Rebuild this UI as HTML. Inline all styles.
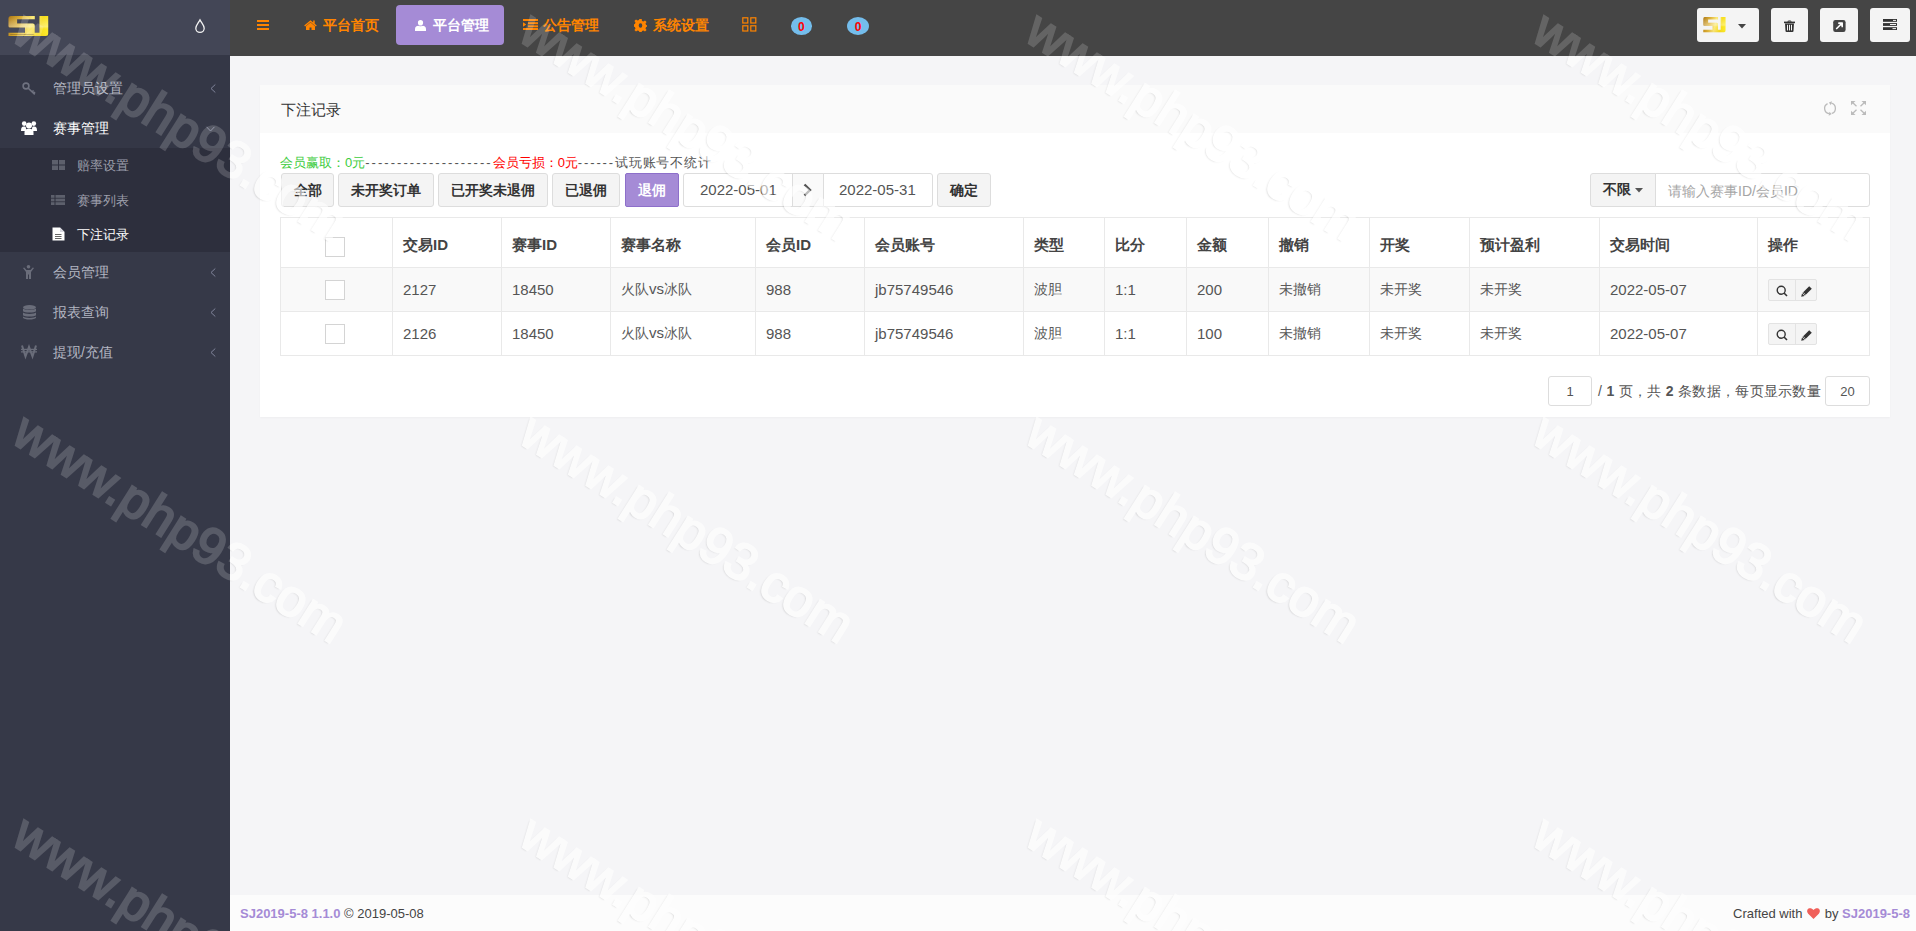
<!DOCTYPE html>
<html><head><meta charset="utf-8">
<style>
*{box-sizing:border-box;margin:0;padding:0}
html,body{width:1916px;height:931px;overflow:hidden;background:#f5f5f7;font-family:"Liberation Sans",sans-serif;color:#333}
.a{position:absolute}
svg{position:absolute;overflow:visible}
#side{position:absolute;left:0;top:0;width:230px;height:931px;background:#363948}
#logo{position:absolute;left:0;top:0;width:230px;height:55px;background:#434656}
#topnav{position:absolute;left:230px;top:0;width:1686px;height:56px;background:#454545}
.nav{position:absolute;top:17px;line-height:16px;color:#ff8400;font-weight:bold;font-size:14px;white-space:nowrap}
.mt{position:absolute;left:53px;line-height:16px;color:#b4b7c3;font-size:14px;white-space:nowrap}
.st{position:absolute;left:77px;line-height:16px;color:#9d9fab;font-size:13px;white-space:nowrap}
.chev{position:absolute;left:210px;width:6px;height:9px}
#panel{position:absolute;left:260px;top:85px;width:1630px;height:332px;background:#fff;box-shadow:0 1px 2px rgba(0,0,0,0.03)}
#phead{position:absolute;left:0;top:0;width:1630px;height:48px;background:#fafafa}
.btn{position:absolute;top:173px;height:34px;line-height:32px;border:1px solid #ddd;background:#f4f4f4;border-radius:3px;color:#333;font-weight:bold;font-size:14px;text-align:center;white-space:nowrap}
.inp{position:absolute;top:173px;height:34px;line-height:32px;border:1px solid #ddd;background:#fff;color:#555;font-size:15px;white-space:nowrap}
table{position:absolute;left:280px;top:217px;width:1590px;table-layout:fixed;border-collapse:collapse;font-size:15px;color:#555}
td,th{border:1px solid #e9e9e9;padding:0 10px;text-align:left;white-space:nowrap}
th{height:50px;font-weight:bold;color:#444;padding-top:5px}
th .cb{position:relative;top:2px}
td{height:44px}
.z{font-style:normal;font-size:14px;color:#5a5a5a}
.cb{display:inline-block;width:20px;height:20px;border:1px solid #d4d4d4;background:#fff;vertical-align:middle;margin-left:34px}
.ops{display:inline-block;position:relative;width:49px;height:22px;margin-left:0px;vertical-align:middle;border:1px solid #e2e2e2;background:#f4f4f4;border-radius:3px}
.tb{position:absolute;top:8px;height:34px;background:#f4f4f4;border-radius:3px}
#footer{position:absolute;left:230px;top:895px;width:1686px;height:36px;background:#fcfcfc;font-size:13px;line-height:37px;color:#444}
.wm{position:absolute;font-size:52px;font-weight:normal;white-space:nowrap;color:#fff;-webkit-text-stroke:2.2px #fff;opacity:0.17;transform-origin:0 0;transform:rotate(32.2deg);line-height:1}
.wl .wm{opacity:0.6;text-shadow:-1px 1.5px 1.5px rgba(0,0,0,0.2)}
</style></head><body>
<div id="side">
  <div id="logo">
    <svg style="left:8px;top:16px" width="41" height="21" viewBox="0 0 41 21" preserveAspectRatio="none"><defs><linearGradient id="g1" x1="0" y1="0" x2="41" y2="14" gradientUnits="userSpaceOnUse"><stop offset="0" stop-color="#a8720e"/><stop offset="0.3" stop-color="#dcae30"/><stop offset="0.55" stop-color="#fbe978"/><stop offset="0.78" stop-color="#f6dc18"/><stop offset="1" stop-color="#ffee22"/></linearGradient><linearGradient id="g1h" x1="0" y1="0" x2="0" y2="21" gradientUnits="userSpaceOnUse"><stop offset="0" stop-color="#fff" stop-opacity="0"/><stop offset="0.5" stop-color="#fff" stop-opacity="0.35"/><stop offset="0.62" stop-color="#fff" stop-opacity="0"/><stop offset="1" stop-color="#c08000" stop-opacity="0.15"/></linearGradient></defs><path d="M3 0 H26.8 V3.3 H9.1 V7.4 H24.7 Q26.7 7.4 26.7 9.4 V16.8 H31.5 V0 H40.2 V17.5 Q40.2 20 37.7 20 H0.5 V16.8 H17 V11.6 H2 Q0.5 11.6 0.5 10.1 V2.5 Q0.5 0 3 0 Z" fill="url(#g1)"/><path d="M3 0 H26.8 V3.3 H9.1 V7.4 H24.7 Q26.7 7.4 26.7 9.4 V16.8 H31.5 V0 H40.2 V17.5 Q40.2 20 37.7 20 H0.5 V16.8 H17 V11.6 H2 Q0.5 11.6 0.5 10.1 V2.5 Q0.5 0 3 0 Z" fill="url(#g1h)"/><rect x="2.3" y="18.3" width="23.5" height="0.7" fill="#6a5520" opacity="0.6"/></svg>
    <svg style="left:194px;top:18px" width="13" height="16" viewBox="0 0 13 16"><path d="M6 1.9 C4.3 5 1.8 7.6 1.8 10.2 A4.2 4.2 0 0 0 10.2 10.2 C10.2 7.6 7.7 5 6 1.9 Z" fill="none" stroke="#f2f2f2" stroke-width="1.3"/></svg>
  </div>
  <div class="a" style="left:0;top:55px;width:230px;height:93px;background:#343746"></div>
  <div class="a" style="left:0;top:148px;width:230px;height:104px;background:#2d2f3d"></div>
  <!-- menu 1 -->
  <svg style="left:22px;top:82px" width="14" height="13" viewBox="0 0 14 13"><circle cx="4" cy="4" r="2.9" fill="none" stroke="#6f7280" stroke-width="1.6"/><path d="M6 6 L12.8 12.3 M10.2 9.8 L11.6 8.5 M11.8 11.3 L13 10.2" stroke="#6f7280" stroke-width="1.6" fill="none"/></svg>
  <div class="mt" style="top:80px">管理员设置</div>
  <svg class="chev" style="top:84px" viewBox="0 0 6 9"><path d="M5.3 0.5 L1 4.5 L5.3 8.5" fill="none" stroke="#80849a" stroke-width="1"/></svg>
  <!-- menu 2 -->
  <svg style="left:21px;top:121px" width="16" height="14" viewBox="0 0 16 14"><g fill="#fff"><circle cx="3.2" cy="2.6" r="2.3"/><circle cx="12.8" cy="2.6" r="2.3"/><path d="M0 10 C0 6 1.5 5.5 3.2 5.5 C4.5 5.5 5 6 5 8 L5 10 Z"/><path d="M16 10 C16 6 14.5 5.5 12.8 5.5 C11.5 5.5 11 6 11 8 L11 10 Z"/><circle cx="8" cy="4.4" r="3"/><path d="M3.5 14 L3.5 11.5 C3.5 8.5 5 7.8 8 7.8 C11 7.8 12.5 8.5 12.5 11.5 L12.5 14 Z"/></g></svg>
  <div class="mt" style="top:120px;color:#fff">赛事管理</div>
  <svg style="left:206px;top:126px" width="9" height="6" viewBox="0 0 9 6"><path d="M0.5 0.8 L4.5 5 L8.5 0.8" fill="none" stroke="#80849a" stroke-width="1"/></svg>
  <!-- submenu -->
  <svg style="left:52px;top:160px" width="13" height="10" viewBox="0 0 13 10"><g fill="#5d606c"><rect x="0" y="0" width="6" height="4.5"/><rect x="7" y="0" width="6" height="4.5"/><rect x="0" y="5.5" width="6" height="4.5"/><rect x="7" y="5.5" width="6" height="4.5"/></g></svg>
  <div class="st" style="top:157.5px">赔率设置</div>
  <svg style="left:51px;top:195px" width="14" height="10" viewBox="0 0 14 10"><g fill="#5d606c"><rect x="0" y="0" width="3.5" height="2.8"/><rect x="4.5" y="0" width="9.5" height="2.8"/><rect x="0" y="3.6" width="3.5" height="2.8"/><rect x="4.5" y="3.6" width="9.5" height="2.8"/><rect x="0" y="7.2" width="3.5" height="2.8"/><rect x="4.5" y="7.2" width="9.5" height="2.8"/></g></svg>
  <div class="st" style="top:192.5px">赛事列表</div>
  <svg style="left:52px;top:227px" width="13" height="14" viewBox="0 0 13 14"><path d="M0.5 0.5 L8 0.5 L12.5 5 L12.5 13.5 L0.5 13.5 Z" fill="#fff"/><path d="M8 0.5 L8 5 L12.5 5" fill="#d8d8e0"/><g fill="#666"><rect x="3" y="7" width="6.5" height="1"/><rect x="3" y="9" width="6.5" height="1"/><rect x="3" y="11" width="6.5" height="1"/></g></svg>
  <div class="st" style="top:226.5px;color:#fff">下注记录</div>
  <!-- menu 3-5 -->
  <svg style="left:23px;top:265px" width="11" height="14" viewBox="0 0 11 14"><g fill="#6a6d7a"><circle cx="5.5" cy="1.8" r="1.8"/><path d="M0 3 L1.2 2.5 L3.5 5 L7.5 5 L9.8 2.5 L11 3 L8 7 L8 14 L6 14 L6 9.5 L5 9.5 L5 14 L3 14 L3 7 Z"/></g></svg>
  <div class="mt" style="top:264px">会员管理</div>
  <svg class="chev" style="top:268px" viewBox="0 0 6 9"><path d="M5.3 0.5 L1 4.5 L5.3 8.5" fill="none" stroke="#80849a" stroke-width="1"/></svg>
  <svg style="left:23px;top:305px" width="13" height="15" viewBox="0 0 13 15"><g fill="#6a6d7a"><ellipse cx="6.5" cy="2.3" rx="6.5" ry="2.3"/><path d="M0 3.6 C1 5.3 12 5.3 13 3.6 L13 6.3 C12 8 1 8 0 6.3 Z"/><path d="M0 7.6 C1 9.3 12 9.3 13 7.6 L13 10.3 C12 12 1 12 0 10.3 Z"/><path d="M0 11.6 C1 13.3 12 13.3 13 11.6 L13 12.8 C12 15.2 1 15.2 0 12.8 Z"/></g></svg>
  <div class="mt" style="top:304px">报表查询</div>
  <svg class="chev" style="top:308px" viewBox="0 0 6 9"><path d="M5.3 0.5 L1 4.5 L5.3 8.5" fill="none" stroke="#80849a" stroke-width="1"/></svg>
  <svg style="left:21px;top:345px" width="16" height="12" viewBox="0 0 16 12"><path d="M1 0.5 L4.5 11.5 L8 2 L11.5 11.5 L15 0.5" fill="none" stroke="#6a6d7a" stroke-width="2"/><path d="M0 4.3 H16 M0 6.8 H16" stroke="#6a6d7a" stroke-width="1.2"/></svg>
  <div class="mt" style="top:344px">提现/充值</div>
  <svg class="chev" style="top:348px" viewBox="0 0 6 9"><path d="M5.3 0.5 L1 4.5 L5.3 8.5" fill="none" stroke="#80849a" stroke-width="1"/></svg>
</div>
<div id="topnav"></div>
<svg style="left:257px;top:20px" width="12" height="10" viewBox="0 0 12 10"><g fill="#ff8400"><rect y="0" width="12" height="2"/><rect y="4" width="12" height="2"/><rect y="8" width="12" height="2"/></g></svg>
<svg style="left:303.5px;top:20px" width="13" height="10" viewBox="0 0 13 10"><path fill="#ff8400" d="M6.5 0.3 L0.2 5.6 L1.1 6.5 L6.5 2 L11.9 6.5 L12.8 5.6 L10.7 3.8 L10.7 0.6 L9.2 0.6 L9.2 2.6 Z M2 6.2 L6.5 2.6 L11 6.2 L11 10 L7.5 10 L7.5 7.6 L5.5 7.6 L5.5 10 L2 10 Z"/></svg>
<div class="nav" style="left:323px">平台首页</div>
<div class="a" style="left:396px;top:5px;width:108px;height:40px;background:#a58bd6;border-radius:4px"></div>
<svg style="left:415px;top:20px" width="11" height="11" viewBox="0 0 11 11"><g fill="#fff"><ellipse cx="5.5" cy="2.8" rx="2.6" ry="2.8"/><path d="M0 11 L0 9 C0 6.5 1.8 5.8 3.3 5.8 C4 6.4 7 6.4 7.7 5.8 C9.2 5.8 11 6.5 11 9 L11 11 Z"/></g></svg>
<div class="nav" style="left:433px;color:#fff">平台管理</div>
<svg style="left:523px;top:19px" width="15" height="11" viewBox="0 0 15 11"><g fill="#ff8400"><rect x="0" y="0" width="15" height="2"/><rect x="5" y="3.2" width="10" height="2"/><rect x="5" y="6.3" width="10" height="2"/><rect x="0" y="9" width="15" height="2"/><path d="M0 3.2 L3.3 5.5 L0 7.8 Z"/></g></svg>
<div class="nav" style="left:543px">公告管理</div>
<svg style="left:634px;top:19px" width="13" height="13" viewBox="0 0 13 13"><path fill="#ff8400" fill-rule="evenodd" d="M5.3 0 H7.7 L8 1.9 L9.4 2.5 L11 1.4 L12.6 3 L11.5 4.6 L12.1 6 L13 6.3 V7.7 L12.1 8 L11.5 9.4 L12.6 11 L11 12.6 L9.4 11.5 L8 12.1 L7.7 13 H5.3 L5 12.1 L3.6 11.5 L2 12.6 L0.4 11 L1.5 9.4 L0.9 8 L0 7.7 V5.3 L0.9 5 L1.5 3.6 L0.4 2 L2 0.4 L3.6 1.5 L5 0.9 Z M6.5 4.3 A1.8 2.2 0 1 0 6.5 8.7 A1.8 2.2 0 1 0 6.5 4.3 Z"/></svg>
<div class="nav" style="left:653px">系统设置</div>
<svg style="left:741.5px;top:16.5px" width="15" height="15" viewBox="0 0 15 15"><g fill="none" stroke="#ff8400" stroke-width="1.2"><rect x="0.8" y="0.8" width="5" height="5.2"/><rect x="8.8" y="0.8" width="5" height="5.2"/><rect x="0.8" y="8.8" width="5" height="5.2"/><rect x="8.8" y="8.8" width="5" height="5.2"/></g></svg>
<div class="a" style="left:790.5px;top:17px;width:21.5px;height:18px;border-radius:50%;background:#74bdec;color:#f00;font-weight:bold;font-size:12px;line-height:20px;text-align:center">0</div>
<div class="a" style="left:847px;top:17px;width:22px;height:18px;border-radius:50%;background:#74bdec;color:#f00;font-weight:bold;font-size:12px;line-height:20px;text-align:center">0</div>
<!-- right buttons -->
<div class="tb" style="left:1697px;width:62px;height:34px"></div>
<svg style="left:1703px;top:17px" width="23" height="16" viewBox="0 0 41 21" preserveAspectRatio="none"><defs><linearGradient id="g2" x1="0" y1="0" x2="41" y2="14" gradientUnits="userSpaceOnUse"><stop offset="0" stop-color="#a8720e"/><stop offset="0.3" stop-color="#dcae30"/><stop offset="0.55" stop-color="#fbe978"/><stop offset="0.78" stop-color="#f6dc18"/><stop offset="1" stop-color="#ffee22"/></linearGradient><linearGradient id="g2h" x1="0" y1="0" x2="0" y2="21" gradientUnits="userSpaceOnUse"><stop offset="0" stop-color="#fff" stop-opacity="0"/><stop offset="0.5" stop-color="#fff" stop-opacity="0.35"/><stop offset="0.62" stop-color="#fff" stop-opacity="0"/><stop offset="1" stop-color="#c08000" stop-opacity="0.15"/></linearGradient></defs><path d="M3 0 H26.8 V3.3 H9.1 V7.4 H24.7 Q26.7 7.4 26.7 9.4 V16.8 H31.5 V0 H40.2 V17.5 Q40.2 20 37.7 20 H0.5 V16.8 H17 V11.6 H2 Q0.5 11.6 0.5 10.1 V2.5 Q0.5 0 3 0 Z" fill="url(#g2)"/><path d="M3 0 H26.8 V3.3 H9.1 V7.4 H24.7 Q26.7 7.4 26.7 9.4 V16.8 H31.5 V0 H40.2 V17.5 Q40.2 20 37.7 20 H0.5 V16.8 H17 V11.6 H2 Q0.5 11.6 0.5 10.1 V2.5 Q0.5 0 3 0 Z" fill="url(#g2h)"/></svg>
<svg style="left:1738px;top:23.5px" width="8" height="5" viewBox="0 0 8 5"><path d="M0 0 H8 L4 4.6 Z" fill="#444"/></svg>
<div class="tb" style="left:1771px;width:37px"></div>
<svg style="left:1784px;top:20px" width="11" height="12" viewBox="0 0 11 12"><g fill="#333"><path d="M3.5 1.6 C3.5 0.2 7.5 0.2 7.5 1.6 L7 2 C7 1.2 4 1.2 4 2 Z"/><rect x="0" y="1.6" width="11" height="1.6"/><path d="M1 3.6 H10 L9.5 11.2 C9.4 11.8 9 12 8.5 12 H2.5 C2 12 1.6 11.8 1.5 11.2 Z"/></g><g fill="#f4f4f4"><rect x="3" y="4.8" width="1" height="5.6"/><rect x="5" y="4.8" width="1" height="5.6"/><rect x="7" y="4.8" width="1" height="5.6"/></g></svg>
<div class="tb" style="left:1820px;width:38px"></div>
<svg style="left:1832.5px;top:20px" width="13" height="12" viewBox="0 0 13 12"><rect x="0.2" y="0" width="12.4" height="12" rx="2.2" fill="#444"/><path d="M3.2 9 L8.6 3.6 M5.2 3.2 H9.2 V7.2" fill="none" stroke="#fff" stroke-width="1.5"/><path d="M9.5 2.6 L9.5 6.8 L5.3 2.6 Z" fill="#fff"/></svg>
<div class="tb" style="left:1870px;width:40px"></div>
<svg style="left:1883px;top:19px" width="14" height="11" viewBox="0 0 14 11"><g fill="#333"><rect x="0" y="0" width="14" height="2.8"/><rect x="0" y="4.1" width="14" height="2.8"/><rect x="0" y="8.2" width="14" height="2.8"/></g><g fill="#f4f4f4"><rect x="10" y="0.9" width="3" height="1"/><rect x="7" y="5" width="6" height="1"/><rect x="9.5" y="9.1" width="3.5" height="1"/></g></svg>
<div id="panel"><div id="phead"></div></div>
<div class="a" style="left:281px;top:101px;font-size:15px;line-height:18px;color:#333">下注记录</div>
<svg style="left:1823px;top:101px" width="14" height="15" viewBox="0 0 14 15"><g transform="translate(0,0.4)"><g fill="none" stroke="#bbb" stroke-width="1.3"><path d="M4.55 2.19 A5.4 5.4 0 0 0 6.06 12.32"/><path d="M8.85 12.07 A5.4 5.4 0 0 0 8.4 1.78"/></g><g fill="#bbb"><path d="M8.7 12.7 L5.7 14.4 L6.4 10.3 Z"/><path d="M5.9 1.1 L8.95 -0.2 L7.85 3.8 Z"/></g></g></svg>
<svg style="left:1851px;top:101px" width="15" height="14" viewBox="0 0 15 14"><g fill="none" stroke="#bbb" stroke-width="1.3"><path d="M1 1 L5.5 5.3 M14 1 L9.5 5.3 M1 13 L5.5 8.7 M14 13 L9.5 8.7"/></g><g fill="#bbb"><path d="M0 0 H4.5 L0 4.3 Z"/><path d="M15 0 H10.5 L15 4.3 Z"/><path d="M0 14 H4.5 L0 9.7 Z"/><path d="M15 14 H10.5 L15 9.7 Z"/></g></svg>
<div class="a" style="left:280px;top:154px;font-size:13px;line-height:17px;white-space:nowrap;color:#555"><span style="color:#3ccc3c">会员赢取：0元</span><span style="letter-spacing:2.04px">--------------------</span><span style="color:#f00">会员亏损：0元</span><span style="letter-spacing:1.85px">------</span><span style="letter-spacing:0.85px">试玩账号不统计</span></div>
<div class="btn" style="left:281px;width:53px">全部</div>
<div class="btn" style="left:338px;width:96px">未开奖订单</div>
<div class="btn" style="left:438px;width:110px">已开奖未退佣</div>
<div class="btn" style="left:552px;width:68px">已退佣</div>
<div class="btn" style="left:625px;width:54px;background:#a58bd6;border-color:#8d6fca;border-radius:2px;color:#fff">退佣</div>
<div class="inp" style="left:683px;width:110px;padding-left:16px;border-radius:3px 0 0 3px">2022-05-01</div>
<div class="inp" style="left:792px;width:32px;background:#fafafa"></div>
<svg style="left:803px;top:183px" width="9" height="14" viewBox="0 0 9 14"><path d="M1.5 1.5 L7 7 L1.5 12.5" fill="none" stroke="#555" stroke-width="2.4"/></svg>
<div class="inp" style="left:823px;width:110px;padding-left:15px;border-radius:0 3px 3px 0">2022-05-31</div>
<div class="btn" style="left:937px;width:54px">确定</div>
<div class="a" style="left:1590px;top:173px;width:66px;height:34px;border:1px solid #ddd;background:#f4f4f4;border-radius:3px 0 0 3px"></div>
<div class="a" style="left:1603px;top:181px;font-size:14px;line-height:17px;font-weight:bold;color:#333">不限</div>
<svg style="left:1635px;top:188px" width="8" height="5" viewBox="0 0 8 5"><path d="M0 0 H8 L4 4.5 Z" fill="#555"/></svg>
<div class="a" style="left:1655px;top:173px;width:215px;height:34px;border:1px solid #ddd;background:#fff;border-radius:0 3px 3px 0"></div>
<div class="a" style="left:1668px;top:182.5px;font-size:14px;line-height:17px;color:#a5a5a5;white-space:nowrap">请输入赛事ID/会员ID</div>
<table>
<tr><th style="width:112px"><span class="cb"></span></th><th style="width:109px">交易ID</th><th style="width:109px">赛事ID</th><th style="width:145px">赛事名称</th><th style="width:109px">会员ID</th><th style="width:159px">会员账号</th><th style="width:81px">类型</th><th style="width:82px">比分</th><th style="width:82px">金额</th><th style="width:101px">撤销</th><th style="width:100px">开奖</th><th style="width:130px">预计盈利</th><th style="width:158px">交易时间</th><th style="width:112px">操作</th></tr>
<tr style="background:#f9f9f9"><td><span class="cb"></span></td><td>2127</td><td>18450</td><td><i class="z">火队</i>vs<i class="z">冰队</i></td><td>988</td><td>jb75749546</td><td><i class="z">波胆</i></td><td>1:1</td><td>200</td><td><i class="z">未撤销</i></td><td><i class="z">未开奖</i></td><td><i class="z">未开奖</i></td><td>2022-05-07</td><td></td></tr>
<tr style="background:#fff"><td><span class="cb"></span></td><td>2126</td><td>18450</td><td><i class="z">火队</i>vs<i class="z">冰队</i></td><td>988</td><td>jb75749546</td><td><i class="z">波胆</i></td><td>1:1</td><td>100</td><td><i class="z">未撤销</i></td><td><i class="z">未开奖</i></td><td><i class="z">未开奖</i></td><td>2022-05-07</td><td></td></tr>
</table>
<div class="a" style="left:1768px;top:279px;width:49px;height:22px;border:1px solid #e3e3e3;background:#f4f4f4;border-radius:2px"></div>
<div class="a" style="left:1795px;top:279px;width:1px;height:22px;background:#e3e3e3"></div>
<div class="a" style="left:1768px;top:323px;width:49px;height:22px;border:1px solid #e3e3e3;background:#f4f4f4;border-radius:2px"></div>
<div class="a" style="left:1795px;top:323px;width:1px;height:22px;background:#e3e3e3"></div>
<svg style="left:1776px;top:285px" width="12" height="12" viewBox="0 0 12 12"><circle cx="5.2" cy="5.2" r="4" fill="none" stroke="#333" stroke-width="1.4"/><path d="M8 8 L11 11" stroke="#333" stroke-width="1.6"/></svg>
<svg style="left:1800.5px;top:285.5px" width="11" height="11" viewBox="0 0 11 11"><path d="M8.2 0.2 L10.8 2.8 L4 9.6 L1.4 7 Z M1 7.4 L3.6 10 L0.2 10.8 Z" fill="#333"/><path d="M2.3 6.4 L4.6 8.7" stroke="#f4f4f4" stroke-width="0.6"/></svg>
<svg style="left:1776px;top:329px" width="12" height="12" viewBox="0 0 12 12"><circle cx="5.2" cy="5.2" r="4" fill="none" stroke="#333" stroke-width="1.4"/><path d="M8 8 L11 11" stroke="#333" stroke-width="1.6"/></svg>
<svg style="left:1800.5px;top:329.5px" width="11" height="11" viewBox="0 0 11 11"><path d="M8.2 0.2 L10.8 2.8 L4 9.6 L1.4 7 Z M1 7.4 L3.6 10 L0.2 10.8 Z" fill="#333"/><path d="M2.3 6.4 L4.6 8.7" stroke="#f4f4f4" stroke-width="0.6"/></svg>
<div class="a" style="left:1548px;top:376px;width:44px;height:30px;border:1px solid #ddd;border-radius:3px;background:#fff;font-size:13px;line-height:30px;text-align:center;color:#555">1</div>
<div class="a" style="left:1598px;top:382.5px;font-size:14px;line-height:17px;color:#555;white-space:nowrap;letter-spacing:0.3px">/ <b>1</b> 页，共 <b>2</b> 条数据，每页显示数量</div>
<div class="a" style="left:1825px;top:376px;width:45px;height:30px;border:1px solid #ddd;border-radius:3px;background:#fff;font-size:13px;line-height:30px;text-align:center;color:#555">20</div>
<div id="footer"><span class="a" style="left:10px;top:0"><b style="color:#a58bd6">SJ2019-5-8 1.1.0</b> © 2019-05-08</span><span class="a" style="right:6px;top:0">Crafted with <svg style="position:relative;display:inline-block;vertical-align:-1px;margin:0 1px" width="13" height="11" viewBox="0 0 13 11"><path d="M6.5 11 L1.2 5.8 C-0.4 4.2 -0.2 1.6 1.5 0.6 C3 -0.3 5 0.2 6.5 2 C8 0.2 10 -0.3 11.5 0.6 C13.2 1.6 13.4 4.2 11.8 5.8 Z" fill="#f0605a"/></svg> by <b style="color:#a58bd6">SJ2019-5-8</b></span></div>
<!--WM-->
<div style="position:absolute;left:0;top:0;width:230px;height:931px;overflow:hidden"><div class="wm" style="left:32.9px;top:2.3px">www.php93.com</div><div class="wm" style="left:539.6px;top:2.3px">www.php93.com</div><div class="wm" style="left:1046.4px;top:2.3px">www.php93.com</div><div class="wm" style="left:1553.2px;top:2.3px">www.php93.com</div><div class="wm" style="left:32.9px;top:403.9px">www.php93.com</div><div class="wm" style="left:539.6px;top:403.9px">www.php93.com</div><div class="wm" style="left:1046.4px;top:403.9px">www.php93.com</div><div class="wm" style="left:1553.2px;top:403.9px">www.php93.com</div><div class="wm" style="left:32.9px;top:805.5px">www.php93.com</div><div class="wm" style="left:539.6px;top:805.5px">www.php93.com</div><div class="wm" style="left:1046.4px;top:805.5px">www.php93.com</div><div class="wm" style="left:1553.2px;top:805.5px">www.php93.com</div></div><div style="position:absolute;left:230px;top:0;width:1686px;height:56px;overflow:hidden"><div class="wm" style="left:-197.1px;top:2.3px">www.php93.com</div><div class="wm" style="left:309.6px;top:2.3px">www.php93.com</div><div class="wm" style="left:816.4px;top:2.3px">www.php93.com</div><div class="wm" style="left:1323.2px;top:2.3px">www.php93.com</div><div class="wm" style="left:-197.1px;top:403.9px">www.php93.com</div><div class="wm" style="left:309.6px;top:403.9px">www.php93.com</div><div class="wm" style="left:816.4px;top:403.9px">www.php93.com</div><div class="wm" style="left:1323.2px;top:403.9px">www.php93.com</div><div class="wm" style="left:-197.1px;top:805.5px">www.php93.com</div><div class="wm" style="left:309.6px;top:805.5px">www.php93.com</div><div class="wm" style="left:816.4px;top:805.5px">www.php93.com</div><div class="wm" style="left:1323.2px;top:805.5px">www.php93.com</div></div><div class="wl" style="position:absolute;left:230px;top:56px;width:1686px;height:875px;overflow:hidden"><div class="wm" style="left:-197.1px;top:-53.7px">www.php93.com</div><div class="wm" style="left:309.6px;top:-53.7px">www.php93.com</div><div class="wm" style="left:816.4px;top:-53.7px">www.php93.com</div><div class="wm" style="left:1323.2px;top:-53.7px">www.php93.com</div><div class="wm" style="left:-197.1px;top:347.9px">www.php93.com</div><div class="wm" style="left:309.6px;top:347.9px">www.php93.com</div><div class="wm" style="left:816.4px;top:347.9px">www.php93.com</div><div class="wm" style="left:1323.2px;top:347.9px">www.php93.com</div><div class="wm" style="left:-197.1px;top:749.5px">www.php93.com</div><div class="wm" style="left:309.6px;top:749.5px">www.php93.com</div><div class="wm" style="left:816.4px;top:749.5px">www.php93.com</div><div class="wm" style="left:1323.2px;top:749.5px">www.php93.com</div></div>
<!--/WM-->
</body></html>
